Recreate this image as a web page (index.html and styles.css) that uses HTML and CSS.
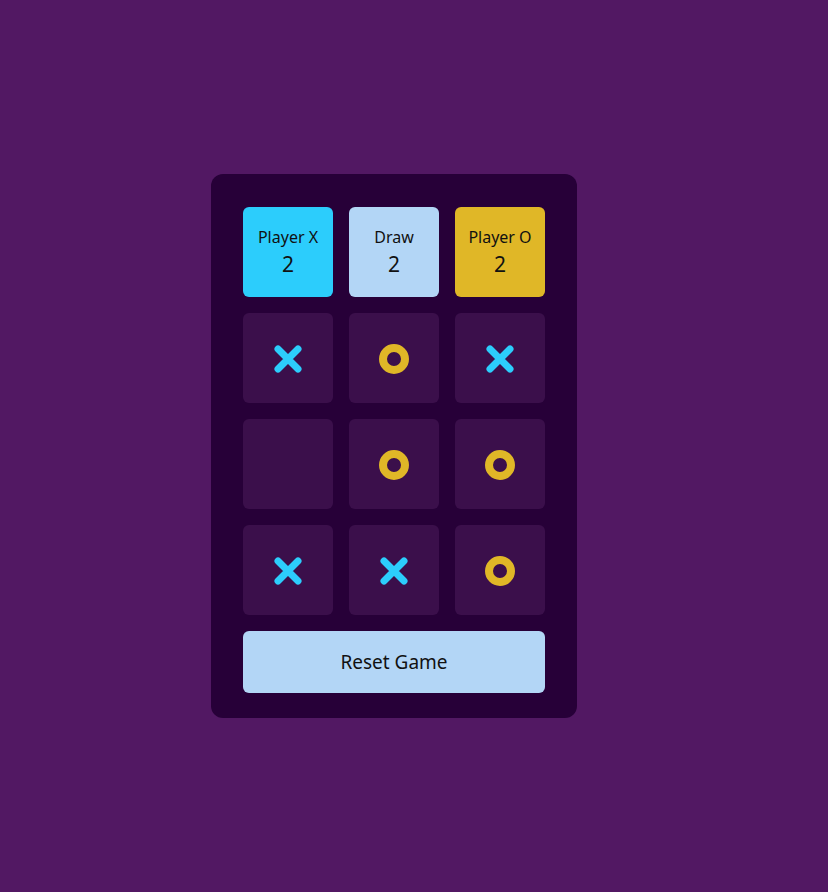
FILE: index.html
```html
<!DOCTYPE html>
<html>
<head>
<meta charset="utf-8">
<link rel="stylesheet" href="styles.css">
</head>
<body>
<main class="game">
  <div class="grid">
    <div class="score score-x"><span class="label">Player X</span><span class="num">2</span></div>
    <div class="score score-draw"><span class="label">Draw</span><span class="num">2</span></div>
    <div class="score score-o"><span class="label">Player O</span><span class="num">2</span></div>

    <div class="cell"><svg class="x" viewBox="0 0 30 30"><path d="M5 5L25 25M25 5L5 25"/></svg></div>
    <div class="cell"><svg class="o" viewBox="0 0 30 30"><circle cx="15" cy="15" r="11"/></svg></div>
    <div class="cell"><svg class="x" viewBox="0 0 30 30"><path d="M5 5L25 25M25 5L5 25"/></svg></div>

    <div class="cell"></div>
    <div class="cell"><svg class="o" viewBox="0 0 30 30"><circle cx="15" cy="15" r="11"/></svg></div>
    <div class="cell"><svg class="o" viewBox="0 0 30 30"><circle cx="15" cy="15" r="11"/></svg></div>

    <div class="cell"><svg class="x" viewBox="0 0 30 30"><path d="M5 5L25 25M25 5L5 25"/></svg></div>
    <div class="cell"><svg class="x" viewBox="0 0 30 30"><path d="M5 5L25 25M25 5L5 25"/></svg></div>
    <div class="cell"><svg class="o" viewBox="0 0 30 30"><circle cx="15" cy="15" r="11"/></svg></div>
  </div>
  <button class="reset">Reset Game</button>
</main>
</body>
</html>
```
FILE: styles.css
```css
html, body {
  margin: 0;
  height: 100%;
}
body {
  background: #521863;
  display: flex;
  justify-content: center;
  align-items: center;
  padding-right: 40px;
  box-sizing: border-box;
  font-family: "Noto Sans", "Open Sans", sans-serif;
}
.game {
  background: #270038;
  border-radius: 12px;
  padding: 33px 32px 25px;
  display: flex;
  flex-direction: column;
  gap: 16px;
}
.grid {
  display: grid;
  grid-template-columns: repeat(3, 90px);
  grid-auto-rows: 90px;
  gap: 16px;
}
.score {
  border-radius: 6px;
  display: flex;
  flex-direction: column;
  align-items: center;
  justify-content: center;
  color: #111;
  gap: 6px;
}
.score .label {
  font-size: 16px;
  line-height: 18px;
}
.score .num {
  font-size: 21px;
  line-height: 24px;
}
.score-x { background: #2ccdfc; }
.score-draw { background: #b3d6f6; }
.score-o { background: #e0b727; }
.cell {
  background: #3b0f4b;
  border-radius: 6px;
  display: flex;
  align-items: center;
  justify-content: center;
}
.cell svg {
  width: 30px;
  height: 30px;
  margin-top: 2px;
}
.x path {
  stroke: #2ccdfc;
  stroke-width: 7;
  stroke-linecap: round;
  fill: none;
}
.o circle {
  stroke: #e0b727;
  stroke-width: 8;
  fill: none;
}
.reset {
  height: 62px;
  border: none;
  border-radius: 6px;
  background: #b3d6f6;
  color: #111;
  font-family: "Noto Sans", "Open Sans", sans-serif;
  font-size: 19px;
}
```
